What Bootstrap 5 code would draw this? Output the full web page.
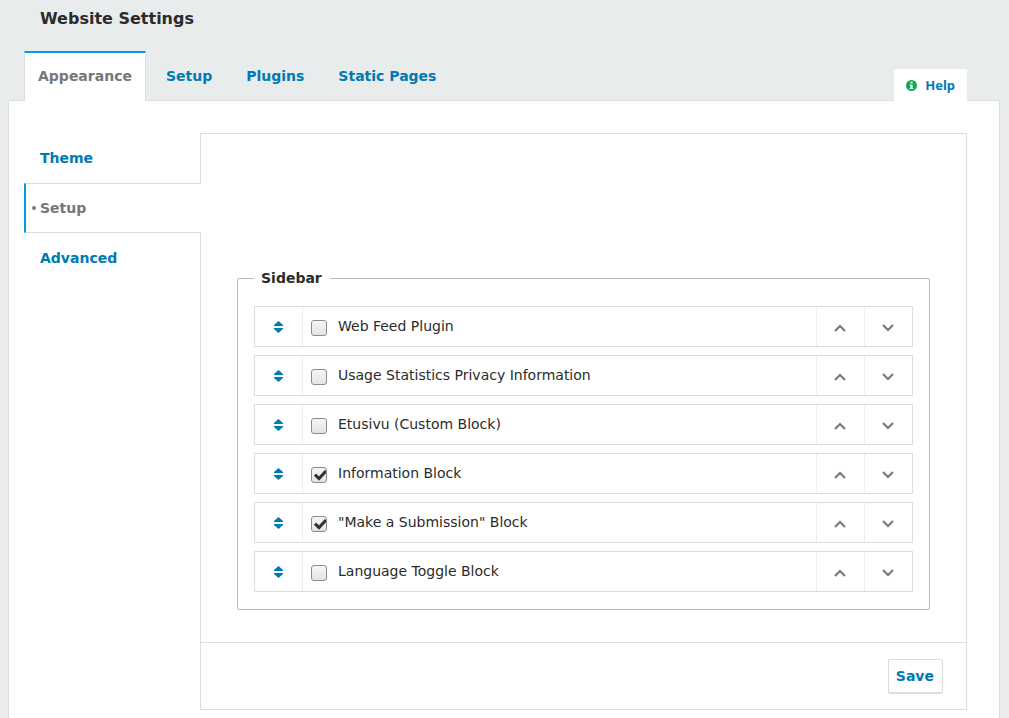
<!DOCTYPE html>
<html lang="en">
<head>
<meta charset="utf-8">
<meta name="viewport" content="width=device-width, initial-scale=1">
<title>Website Settings</title>
<link href="https://cdn.jsdelivr.net/npm/bootstrap@5.3.0/dist/css/bootstrap.min.css" rel="stylesheet">
<style>
  :root { --line: #ddd; --link: #007ab2; --accent: #009de5; --muted: #777; }
  body { background: #e8eced; color: #2b2b2b; font: 14px/20px "DejaVu Sans", Verdana, sans-serif; }
  a { color: var(--link); text-decoration: none; }
  .page-title { font-size: 16px; line-height: 20px; font-weight: 700; padding: 9px 40px 22px; }
  .main-tabs { padding: 0 42px 0 24px; }
  .main-tabs .nav-link { color: var(--link); font-weight: 700; padding: 15px 14px 14px; line-height: 20px; border: 0 solid transparent; border-radius: 0; margin-right: 6px; }
  .main-tabs .nav-link.active { position: relative; z-index: 1; background: #fff; color: var(--muted); border: 1px solid var(--line); border-top: 2px solid var(--accent); border-bottom: 0; padding: 13px 13px 15px; margin-bottom: -1px; }
  .help-tab { position: relative; z-index: 1; background: #fff; font: 700 13px/16px "Noto Sans", sans-serif; padding: 8px 12px; border-radius: 2px 2px 0 0; margin-bottom: -1px; }
  .sheet { background: #fff; border: 1px solid var(--line); border-bottom: 0; border-radius: 2px 2px 0 0; margin: 0 9px 0 8px; padding: 32px 32px 8px 15px; }
  .side-tabs { width: 176px; }
  .side-tabs a { display: block; font-weight: 700; padding: 15px 16px; line-height: 20px; }
  .side-tabs a.active { position: relative; z-index: 1; background: #fff; color: var(--muted); border: 1px solid var(--line); border-width: 1px 0; padding: 14px; margin-right: -1px; border-left: 2px solid var(--accent); }
  .side-tabs a.active::before { content: ""; position: absolute; left: 6px; top: 22px; width: 4px; height: 4px; border-radius: 50%; background: var(--muted); }
  .pane { border: 1px solid var(--line); }
  .pane-body { padding: 134px 36px 32px; }
  .sidebar-set { border: 1px solid #bbb; border-radius: 2px; padding: 18px 16px 17px; }
  .sidebar-set legend { float: none; width: auto; font-size: 14px; line-height: 20px; font-weight: 700; padding: 0 8px 0 7px; margin: 0; }
  .order-row { border: 1px solid var(--line); height: 41px; }
  .order-list { gap: 8px; }
  .order-btn { width: 48px; background: none; border: 0; padding: 2px 2px 0 0; color: var(--muted); display: flex; align-items: center; justify-content: center; }
  .order-name, .order-btn + .order-btn, .order-name + .order-btn { border-left: 1px solid #eee; }
  .order-grip { width: 47px; color: var(--link); padding: 0; }
  .order-name { padding-left: 8px; }
  .order-name label { padding: 0 11px 2px; }
  .tick { appearance: none; flex: none; width: 16px; height: 16px; margin: 2px 0 0; border: 1px solid #8b8b87; border-radius: 3px; background: linear-gradient(#f6f6f6, #e3e3e3); }
  .tick:checked { background: url("data:image/svg+xml,%3Csvg xmlns='http://www.w3.org/2000/svg' viewBox='0 0 14 14'%3E%3Cpath d='M3 6.6l4 4L14 3' fill='none' stroke='%232e3436' stroke-width='3'/%3E%3C/svg%3E"), linear-gradient(#f6f6f6, #e3e3e3); }
  .pane-foot { border-top: 1px solid var(--line); padding: 16px 23px; }
  .save-btn { background: #fff; color: var(--link); font-weight: 700; font-size: 14px; line-height: 20px; padding: 6px 8px 6px 7px; border: 1px solid var(--line); border-radius: 2px; box-shadow: 0 1px 0 var(--line); }
</style>
</head>
<body class="min-vh-100 d-flex flex-column">
<svg class="d-none" aria-hidden="true">
  <symbol id="grip" viewBox="0 0 9 12"><path d="M4.5 0 9 4v1H0V4zM0 7h9v1l-4.500 4L0 8z" fill="currentColor"/></symbol>
  <symbol id="up" viewBox="0 0 12 8"><path d="M1 7l5-5 5 5" fill="none" stroke="currentColor" stroke-width="2"/></symbol>
  <symbol id="down" viewBox="0 0 12 8"><path d="M1 1l5 5 5-5" fill="none" stroke="currentColor" stroke-width="2"/></symbol>
</svg>
<h1 class="page-title m-0">Website Settings</h1>
<div class="main-tabs d-flex justify-content-between align-items-end">
  <ul class="nav">
    <li class="nav-item"><a class="nav-link active" aria-current="page" href="#">Appearance</a></li>
    <li class="nav-item"><a class="nav-link" href="#">Setup</a></li>
    <li class="nav-item"><a class="nav-link" href="#">Plugins</a></li>
    <li class="nav-item"><a class="nav-link" href="#">Static Pages</a></li>
  </ul>
  <a class="help-tab d-flex align-items-center" href="#">
    <svg class="me-2" width="11" height="11" viewBox="0 0 10 10" aria-hidden="true"><circle cx="5" cy="5" r="5" fill="#00b24e"/><path d="M4 1.500h2V3H4zM3.200 4H6v3.200h.8v1H3.200v-1H4V5h-.8z" fill="#fff"/></svg>Help</a>
</div>
<main class="sheet flex-grow-1">
  <div class="d-flex align-items-stretch">
    <nav class="side-tabs flex-shrink-0" aria-label="Appearance">
      <a href="#">Theme</a>
      <a class="active" aria-current="page" href="#">Setup</a>
      <a href="#">Advanced</a>
    </nav>
    <form class="pane flex-grow-1">
      <div class="pane-body">
        <fieldset class="sidebar-set">
          <legend>Sidebar</legend>
          <div class="order-list d-flex flex-column">
            <div class="order-row d-flex">
              <button type="button" class="order-btn order-grip" aria-label="Drag to reorder"><svg width="9" height="12"><use href="#grip"/></svg></button>
              <div class="order-name d-flex flex-grow-1 align-items-center"><input class="tick" type="checkbox" id="feed"><label for="feed">Web Feed Plugin</label></div>
              <button type="button" class="order-btn" aria-label="Move up"><svg width="12" height="8"><use href="#up"/></svg></button>
              <button type="button" class="order-btn" aria-label="Move down"><svg width="12" height="8"><use href="#down"/></svg></button>
            </div>
            <div class="order-row d-flex">
              <button type="button" class="order-btn order-grip" aria-label="Drag to reorder"><svg width="9" height="12"><use href="#grip"/></svg></button>
              <div class="order-name d-flex flex-grow-1 align-items-center"><input class="tick" type="checkbox" id="stats"><label for="stats">Usage Statistics Privacy Information</label></div>
              <button type="button" class="order-btn" aria-label="Move up"><svg width="12" height="8"><use href="#up"/></svg></button>
              <button type="button" class="order-btn" aria-label="Move down"><svg width="12" height="8"><use href="#down"/></svg></button>
            </div>
            <div class="order-row d-flex">
              <button type="button" class="order-btn order-grip" aria-label="Drag to reorder"><svg width="9" height="12"><use href="#grip"/></svg></button>
              <div class="order-name d-flex flex-grow-1 align-items-center"><input class="tick" type="checkbox" id="custom"><label for="custom">Etusivu (Custom Block)</label></div>
              <button type="button" class="order-btn" aria-label="Move up"><svg width="12" height="8"><use href="#up"/></svg></button>
              <button type="button" class="order-btn" aria-label="Move down"><svg width="12" height="8"><use href="#down"/></svg></button>
            </div>
            <div class="order-row d-flex">
              <button type="button" class="order-btn order-grip" aria-label="Drag to reorder"><svg width="9" height="12"><use href="#grip"/></svg></button>
              <div class="order-name d-flex flex-grow-1 align-items-center"><input class="tick" type="checkbox" id="info" checked><label for="info">Information Block</label></div>
              <button type="button" class="order-btn" aria-label="Move up"><svg width="12" height="8"><use href="#up"/></svg></button>
              <button type="button" class="order-btn" aria-label="Move down"><svg width="12" height="8"><use href="#down"/></svg></button>
            </div>
            <div class="order-row d-flex">
              <button type="button" class="order-btn order-grip" aria-label="Drag to reorder"><svg width="9" height="12"><use href="#grip"/></svg></button>
              <div class="order-name d-flex flex-grow-1 align-items-center"><input class="tick" type="checkbox" id="submit" checked><label for="submit">"Make a Submission" Block</label></div>
              <button type="button" class="order-btn" aria-label="Move up"><svg width="12" height="8"><use href="#up"/></svg></button>
              <button type="button" class="order-btn" aria-label="Move down"><svg width="12" height="8"><use href="#down"/></svg></button>
            </div>
            <div class="order-row d-flex">
              <button type="button" class="order-btn order-grip" aria-label="Drag to reorder"><svg width="9" height="12"><use href="#grip"/></svg></button>
              <div class="order-name d-flex flex-grow-1 align-items-center"><input class="tick" type="checkbox" id="language"><label for="language">Language Toggle Block</label></div>
              <button type="button" class="order-btn" aria-label="Move up"><svg width="12" height="8"><use href="#up"/></svg></button>
              <button type="button" class="order-btn" aria-label="Move down"><svg width="12" height="8"><use href="#down"/></svg></button>
            </div>
          </div>
        </fieldset>
      </div>
      <div class="pane-foot d-flex justify-content-end">
        <button type="submit" class="save-btn">Save</button>
      </div>
    </form>
  </div>
</main>
<script src="https://cdn.jsdelivr.net/npm/bootstrap@5.3.0/dist/js/bootstrap.bundle.min.js"></script>
</body>
</html>
